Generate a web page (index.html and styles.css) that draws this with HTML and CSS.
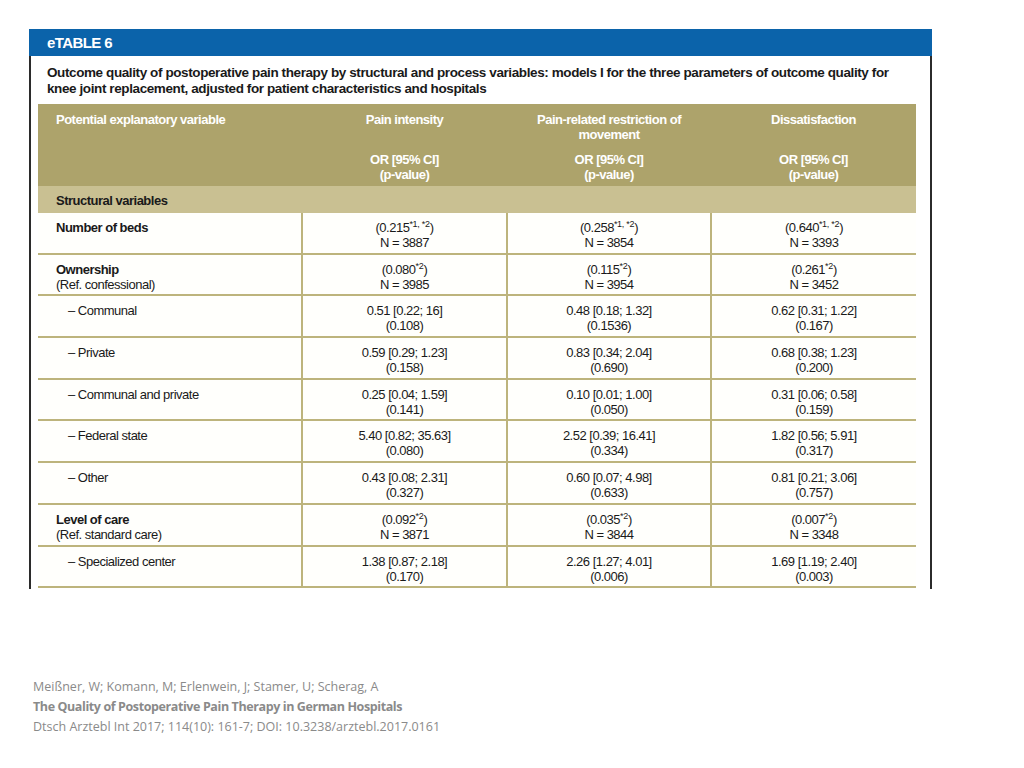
FILE: index.html
```html
<!DOCTYPE html>
<html>
<head>
<meta charset="utf-8">
<link rel="stylesheet" href="styles.css">
</head>
<body>
<div class="frame">
  <div class="bar">eTABLE 6</div>
  <div class="caption">Outcome quality of postoperative pain therapy by structural and process variables: models I for the three parameters of outcome quality for knee joint replacement, adjusted for patient characteristics and hospitals</div>
  <table class="tbl">
    <colgroup>
      <col class="c1"><col class="c2"><col class="c3"><col class="c4">
    </colgroup>
    <thead>
      <tr class="head">
        <th class="left"><div class="ht">Potential explanatory variable</div></th>
        <th><div class="ht">Pain intensity</div><div class="hs">OR [95% CI]<br>(p-value)</div></th>
        <th><div class="ht">Pain-related restriction of<br>movement</div><div class="hs">OR [95% CI]<br>(p-value)</div></th>
        <th><div class="ht">Dissatisfaction</div><div class="hs">OR [95% CI]<br>(p-value)</div></th>
      </tr>
      <tr class="section">
        <th class="left">Structural variables</th>
        <th colspan="3"></th>
      </tr>
    </thead>
    <tbody>
      <tr>
        <td class="left"><b>Number of beds</b></td>
        <td>(0.215<sup>*1, *2</sup>)<br>N = 3887</td>
        <td>(0.258<sup>*1, *2</sup>)<br>N = 3854</td>
        <td>(0.640<sup>*1, *2</sup>)<br>N = 3393</td>
      </tr>
      <tr>
        <td class="left"><b>Ownership</b><br>(Ref. confessional)</td>
        <td>(0.080<sup>*2</sup>)<br>N = 3985</td>
        <td>(0.115<sup>*2</sup>)<br>N = 3954</td>
        <td>(0.261<sup>*2</sup>)<br>N = 3452</td>
      </tr>
      <tr>
        <td class="left sub">– Communal</td>
        <td>0.51 [0.22; 16]<br>(0.108)</td>
        <td>0.48 [0.18; 1.32]<br>(0.1536)</td>
        <td>0.62 [0.31; 1.22]<br>(0.167)</td>
      </tr>
      <tr>
        <td class="left sub">– Private</td>
        <td>0.59 [0.29; 1.23]<br>(0.158)</td>
        <td>0.83 [0.34; 2.04]<br>(0.690)</td>
        <td>0.68 [0.38; 1.23]<br>(0.200)</td>
      </tr>
      <tr>
        <td class="left sub">– Communal and private</td>
        <td>0.25 [0.04; 1.59]<br>(0.141)</td>
        <td>0.10 [0.01; 1.00]<br>(0.050)</td>
        <td>0.31 [0.06; 0.58]<br>(0.159)</td>
      </tr>
      <tr>
        <td class="left sub">– Federal state</td>
        <td>5.40 [0.82; 35.63]<br>(0.080)</td>
        <td>2.52 [0.39; 16.41]<br>(0.334)</td>
        <td>1.82 [0.56; 5.91]<br>(0.317)</td>
      </tr>
      <tr>
        <td class="left sub">– Other</td>
        <td>0.43 [0.08; 2.31]<br>(0.327)</td>
        <td>0.60 [0.07; 4.98]<br>(0.633)</td>
        <td>0.81 [0.21; 3.06]<br>(0.757)</td>
      </tr>
      <tr>
        <td class="left"><b>Level of care</b><br>(Ref. standard care)</td>
        <td>(0.092<sup>*2</sup>)<br>N = 3871</td>
        <td>(0.035<sup>*2</sup>)<br>N = 3844</td>
        <td>(0.007<sup>*2</sup>)<br>N = 3348</td>
      </tr>
      <tr>
        <td class="left sub">– Specialized center</td>
        <td>1.38 [0.87; 2.18]<br>(0.170)</td>
        <td>2.26 [1.27; 4.01]<br>(0.006)</td>
        <td>1.69 [1.19; 2.40]<br>(0.003)</td>
      </tr>
    </tbody>
  </table>
</div>
<div class="cite">
  <div>Meißner, W; Komann, M; Erlenwein, J; Stamer, U; Scherag, A</div>
  <div class="strong">The Quality of Postoperative Pain Therapy in German Hospitals</div>
  <div>Dtsch Arztebl Int 2017; 114(10): 161-7; DOI: 10.3238/arztebl.2017.0161</div>
</div>
</body>
</html>
```

FILE: styles.css
```css
html, body {
  margin: 0;
  padding: 0;
  background: #ffffff;
}

body {
  font-family: "Liberation Sans", Arial, sans-serif;
  color: #1a1a1a;
}

.frame {
  width: 899px;
  margin: 29px 0 0 29px;
  border-left: 2px solid #2b2b2b;
  border-right: 2px solid #2b2b2b;
  padding-bottom: 1px;
}

.bar {
  background: #0b63aa;
  color: #ffffff;
  font-weight: bold;
  font-size: 15px;
  letter-spacing: -0.6px;
  height: 27px;
  line-height: 28px;
  margin: 0 -2px;
  padding-left: 18px;
}

.caption {
  font-weight: bold;
  font-size: 13.5px;
  letter-spacing: -0.4px;
  line-height: 16px;
  padding: 9px 30px 0 16px;
  color: #1a1a1a;
}

.tbl {
  margin: 7px 0 0 7px;
  width: 878px;
  border-collapse: collapse;
  table-layout: fixed;
  font-size: 13px;
  letter-spacing: -0.5px;
  line-height: 15px;
  background: #fffffc;
}

.c1 { width: 264px; }
.c2 { width: 205px; }
.c3 { width: 204px; }
.c4 { width: 205px; }

.tbl th {
  font-weight: bold;
  color: #ffffff;
  text-align: center;
  vertical-align: top;
}

.head th {
  background: #ada36b;
  padding: 8px 8px 4px;
}

.ht {
  height: 30px;
  margin-bottom: 10px;
}

.tbl th.left,
.tbl td.left {
  text-align: left;
  padding-left: 18px;
}

.section th {
  background: #c9c092;
  color: #1a1a1a;
  height: 26px;
  padding: 1px 0 0;
  vertical-align: middle;
}

.section th.left {
  padding-left: 18px;
}

.tbl td {
  text-align: center;
  vertical-align: top;
  padding: 7px 6px 2.7px;
  border-bottom: 2px solid #bdb47c;
  color: #1a1a1a;
}

.tbl td + td {
  border-left: 2px solid #bdb47c;
}

.tbl td.sub {
  padding-left: 30px;
}

sup {
  font-size: 9px;
  line-height: 0;
  vertical-align: 5px;
  letter-spacing: -0.3px;
}

.cite {
  margin: 88px 0 0 33px;
  font-family: "Open Sans", "Noto Sans", sans-serif;
  font-size: 12.5px;
  line-height: 20px;
  color: #8a8a8a;
}

.cite .strong {
  font-weight: bold;
  letter-spacing: -0.4px;
}
```
